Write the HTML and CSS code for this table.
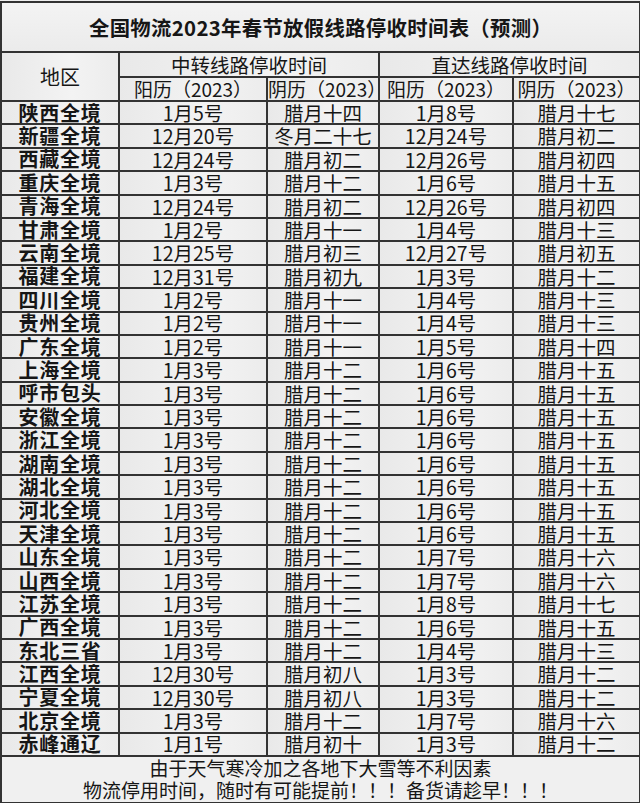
FILE: index.html
```html
<!DOCTYPE html>
<html lang="zh-CN">
<head>
<meta charset="utf-8">
<title>全国物流2023年春节放假线路停收时间表（预测）</title>
<link rel="stylesheet" href="styles.css">
</head>
<body>
<table class="sheet">
  <colgroup>
    <col class="c-area">
    <col class="c-a1">
    <col class="c-a2">
    <col class="c-b1">
    <col class="c-b2">
  </colgroup>
  <thead>
    <tr class="title-row"><th colspan="5" class="title">全国物流2023年春节放假线路停收时间表（预测）</th></tr>
    <tr class="head-row"><th rowspan="2" class="area-head">地区</th><th colspan="2">中转线路停收时间</th><th colspan="2">直达线路停收时间</th></tr>
    <tr class="head-row sub"><th>阳历（2023）</th><th>阴历（2023）</th><th>阳历（2023）</th><th>阴历（2023）</th></tr>
  </thead>
  <tbody>
    <tr><td class="area">陕西全境</td><td>1月5号</td><td>腊月十四</td><td>1月8号</td><td>腊月十七</td></tr>
    <tr><td class="area">新疆全境</td><td>12月20号</td><td>冬月二十七</td><td>12月24号</td><td>腊月初二</td></tr>
    <tr><td class="area">西藏全境</td><td>12月24号</td><td>腊月初二</td><td>12月26号</td><td>腊月初四</td></tr>
    <tr><td class="area">重庆全境</td><td>1月3号</td><td>腊月十二</td><td>1月6号</td><td>腊月十五</td></tr>
    <tr><td class="area">青海全境</td><td>12月24号</td><td>腊月初二</td><td>12月26号</td><td>腊月初四</td></tr>
    <tr><td class="area">甘肃全境</td><td>1月2号</td><td>腊月十一</td><td>1月4号</td><td>腊月十三</td></tr>
    <tr><td class="area">云南全境</td><td>12月25号</td><td>腊月初三</td><td>12月27号</td><td>腊月初五</td></tr>
    <tr><td class="area">福建全境</td><td>12月31号</td><td>腊月初九</td><td>1月3号</td><td>腊月十二</td></tr>
    <tr><td class="area">四川全境</td><td>1月2号</td><td>腊月十一</td><td>1月4号</td><td>腊月十三</td></tr>
    <tr><td class="area">贵州全境</td><td>1月2号</td><td>腊月十一</td><td>1月4号</td><td>腊月十三</td></tr>
    <tr><td class="area">广东全境</td><td>1月2号</td><td>腊月十一</td><td>1月5号</td><td>腊月十四</td></tr>
    <tr><td class="area">上海全境</td><td>1月3号</td><td>腊月十二</td><td>1月6号</td><td>腊月十五</td></tr>
    <tr><td class="area">呼市包头</td><td>1月3号</td><td>腊月十二</td><td>1月6号</td><td>腊月十五</td></tr>
    <tr><td class="area">安徽全境</td><td>1月3号</td><td>腊月十二</td><td>1月6号</td><td>腊月十五</td></tr>
    <tr><td class="area">浙江全境</td><td>1月3号</td><td>腊月十二</td><td>1月6号</td><td>腊月十五</td></tr>
    <tr><td class="area">湖南全境</td><td>1月3号</td><td>腊月十二</td><td>1月6号</td><td>腊月十五</td></tr>
    <tr><td class="area">湖北全境</td><td>1月3号</td><td>腊月十二</td><td>1月6号</td><td>腊月十五</td></tr>
    <tr><td class="area">河北全境</td><td>1月3号</td><td>腊月十二</td><td>1月6号</td><td>腊月十五</td></tr>
    <tr><td class="area">天津全境</td><td>1月3号</td><td>腊月十二</td><td>1月6号</td><td>腊月十五</td></tr>
    <tr><td class="area">山东全境</td><td>1月3号</td><td>腊月十二</td><td>1月7号</td><td>腊月十六</td></tr>
    <tr><td class="area">山西全境</td><td>1月3号</td><td>腊月十二</td><td>1月7号</td><td>腊月十六</td></tr>
    <tr><td class="area">江苏全境</td><td>1月3号</td><td>腊月十二</td><td>1月8号</td><td>腊月十七</td></tr>
    <tr><td class="area">广西全境</td><td>1月3号</td><td>腊月十二</td><td>1月6号</td><td>腊月十五</td></tr>
    <tr><td class="area">东北三省</td><td>1月3号</td><td>腊月十二</td><td>1月4号</td><td>腊月十三</td></tr>
    <tr><td class="area">江西全境</td><td>12月30号</td><td>腊月初八</td><td>1月3号</td><td>腊月十二</td></tr>
    <tr><td class="area">宁夏全境</td><td>12月30号</td><td>腊月初八</td><td>1月3号</td><td>腊月十二</td></tr>
    <tr><td class="area">北京全境</td><td>1月3号</td><td>腊月十二</td><td>1月7号</td><td>腊月十六</td></tr>
    <tr><td class="area">赤峰通辽</td><td>1月1号</td><td>腊月初十</td><td>1月3号</td><td>腊月十二</td></tr>
  </tbody>
  <tfoot>
    <tr class="note-row"><td colspan="5" class="note">由于天气寒冷加之各地下大雪等不利因素<br>物流停用时间，随时有可能提前！！！备货请趁早！！！</td></tr>
  </tfoot>
</table>
</body>
</html>
```
FILE: styles.css
```css
html, body {
  margin: 0;
  padding: 0;
  background: #eeeeee;
}
body {
  font-family: "Noto Sans CJK SC", "Noto Sans", sans-serif;
  color: #161616;
}
.sheet {
  border-collapse: collapse;
  table-layout: fixed;
  width: 639px;
  margin-top: 1px;
  background: #efefef;
  border: 2px solid #2e2e2e;
}
.c-area { width: 118px; }
.c-a1 { width: 148px; }
.c-a2 { width: 112px; }
.c-b1 { width: 134px; }
.c-b2 { width: 127px; }
.sheet th,
.sheet td {
  border: 2px solid #333333;
  padding: 0;
  text-align: center;
  vertical-align: middle;
  white-space: nowrap;
  font-weight: normal;
  font-size: 19.5px;
  line-height: 1;
  background: linear-gradient(to right, #e9e9e9, #f3f3f3 60%, #ececec);
}
.title-row { height: 50px; }
.sheet th.title {
  font-weight: bold;
  font-size: 20.4px;
  letter-spacing: 0.3px;
  background: linear-gradient(to bottom, #f3f3f3, #ebebeb);
}
.head-row { height: 24.5px; }
.head-row.sub th { font-size: 19px; }
.sheet th.area-head { font-size: 20px; }
.sheet tbody tr { height: 23.4px; }
.sheet td.area {
  font-weight: bold;
  font-size: 20px;
  letter-spacing: 0.8px;
}
.note-row { height: 46px; }
.sheet td.note {
  font-size: 19px;
  line-height: 22px;
  padding-bottom: 1px;
  background: #f0f0f0;
}
```
